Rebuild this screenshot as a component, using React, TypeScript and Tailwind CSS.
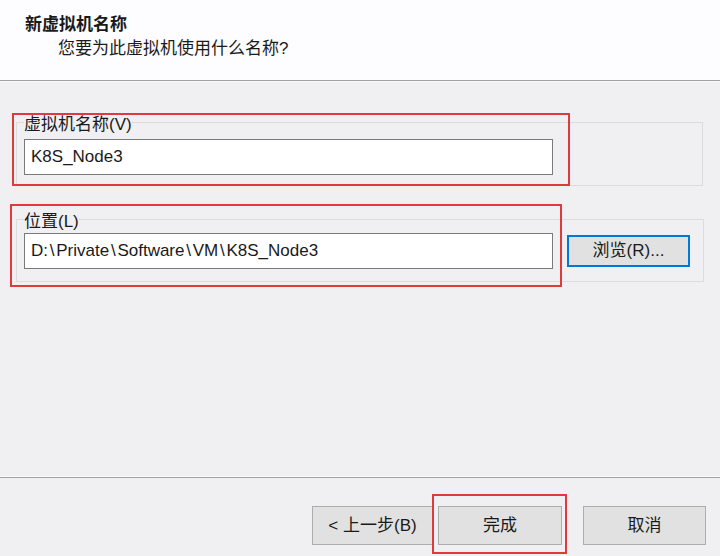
const FONT = "font-['Liberation_Sans','Noto_Sans_CJK_SC',sans-serif]";

function Button({ label, className = "" }: { label: string; className?: string }) {
  return (
    <div
      className={`flex items-center justify-center h-[39px] bg-[#e1e1e1] border border-[#adadad] text-[17px] text-[#1a1a1a] ${className}`}
    >
      {label}
    </div>
  );
}

function TextBox({ value }: { value: string }) {
  // backslashes are wider in the original system font
  const parts = value.split("\\");
  return (
    <div className="flex items-center w-[529px] h-[36px] bg-white border border-[#7a7a7a] pl-[6px] text-[17px] text-[#1a1a1a] whitespace-pre">
      {parts.map((p, i) => (
        <span key={i}>
          {i > 0 && <span className="mx-[1.75px]">\</span>}
          {p}
        </span>
      ))}
    </div>
  );
}

export default function App() {
  return (
    <div className={`relative w-[720px] h-[556px] bg-[#f0eff1] flex flex-col overflow-hidden ${FONT}`}>
      {/* header */}
      <div className="h-[80px] bg-[#fdfcfe] pl-[25px] pt-[15px] text-[#1a1a1a]">
        <div className="text-[17px] leading-[20px] font-bold">新虚拟机名称</div>
        <div className="mt-[4px] ml-[33px] text-[17px] leading-[20px]">您要为此虚拟机使用什么名称?</div>
      </div>
      <div className="h-px bg-[#a0a0a0]" />
      <div className="h-px bg-[#fafafa]" />

      {/* body */}
      <div className="flex-1 flex flex-col">
        <fieldset className="mt-[27px] ml-[16px] mr-[17px] border border-[#dcdbdd] pl-[7px] pb-[10px]">
          <legend className="pt-[6px] text-[17px] leading-[20px] text-[#1a1a1a]">虚拟机名称(V)</legend>
          <div className="mt-[4px]">
            <TextBox value="K8S_Node3" />
          </div>
        </fieldset>

        <fieldset className="mt-[20px] ml-[16px] mr-[17px] border border-[#dcdbdd] pl-[7px] pr-[13px] pb-[12px]">
          <legend className="pt-[6px] text-[17px] leading-[20px] text-[#1a1a1a]">位置(L)</legend>
          <div className="mt-[1px] flex items-center gap-[14px]">
            <TextBox value="D:\Private\Software\VM\K8S_Node3" />
            <div className="flex items-center justify-center w-[123px] h-[32px] bg-[#e1e1e1] border-2 border-[#0078d7] text-[17px] text-[#1a1a1a]">
              浏览(R)...
            </div>
          </div>
        </fieldset>
      </div>

      {/* footer */}
      <div className="h-px bg-[#fafafa]" />
      <div className="h-px bg-[#a0a0a0]" />
      <div className="h-[78px] flex items-start justify-end pt-[28px] pr-[14px]">
        <Button label="< 上一步(B)" className="w-[121px]" />
        <Button label="完成" className="w-[124px] ml-[5px]" />
        <Button label="取消" className="w-[123px] ml-[21px]" />
      </div>

      {/* red annotation boxes */}
      <div className="absolute left-[12px] top-[113px] w-[558px] h-[73px] border-2 border-[#e03a3c]" />
      <div className="absolute left-[10px] top-[204px] w-[552px] h-[83px] border-2 border-[#e03a3c]" />
      <div className="absolute left-[432px] top-[494px] w-[135px] h-[60px] border-2 border-[#e03a3c]" />
    </div>
  );
}
